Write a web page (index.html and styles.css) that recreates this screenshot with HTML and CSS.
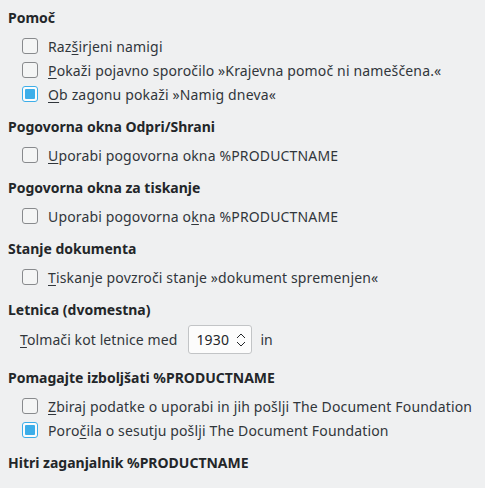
FILE: index.html
```html
<!DOCTYPE html>
<html>
<head>
<meta charset="utf-8">
<link rel="stylesheet" href="styles.css">
</head>
<body>
<div class="page">
  <section class="sect">
    <h2 class="head">Pomoč</h2>
    <div class="row"><span class="cb"></span><span class="lbl">Raz<u>š</u>irjeni namigi</span></div>
    <div class="row"><span class="cb"></span><span class="lbl"><u>P</u>okaži pojavno sporočilo »Krajevna pomoč ni nameščena.«</span></div>
    <div class="row"><span class="cb on"></span><span class="lbl"><u>O</u>b zagonu pokaži »Namig dneva«</span></div>
  </section>
  <section class="sect">
    <h2 class="head">Pogovorna okna Odpri/Shrani</h2>
    <div class="row"><span class="cb"></span><span class="lbl"><u>U</u>porabi pogovorna okna %PRODUCTNAME</span></div>
  </section>
  <section class="sect">
    <h2 class="head">Pogovorna okna za tiskanje</h2>
    <div class="row"><span class="cb"></span><span class="lbl">Uporabi pogovorna o<u>k</u>na %PRODUCTNAME</span></div>
  </section>
  <section class="sect">
    <h2 class="head">Stanje dokumenta</h2>
    <div class="row"><span class="cb"></span><span class="lbl"><u>T</u>iskanje povzroči stanje »dokument spremenjen«</span></div>
  </section>
  <section class="sect">
    <h2 class="head">Letnica (dvomestna)</h2>
    <div class="spinrow">
      <span class="spinlbl"><u>T</u>olmači kot letnice med</span>
      <span class="spin"><span class="val">1930</span>
        <svg class="arrows" width="10" height="16" viewBox="0 0 10 16"><path d="M1 6 L5 2 L9 6 M1 10 L5 14 L9 10" fill="none" stroke="#232629" stroke-width="1"/></svg>
      </span>
      <span class="after">in</span>
    </div>
  </section>
  <section class="sect">
    <h2 class="head">Pomagajte izboljšati %PRODUCTNAME</h2>
    <div class="row"><span class="cb"></span><span class="lbl"><u>Z</u>biraj podatke o uporabi in jih pošlji The Document Foundation</span></div>
    <div class="row"><span class="cb on"></span><span class="lbl">Poro<u>č</u>ila o sesutju pošlji The Document Foundation</span></div>
  </section>
  <section class="sect">
    <h2 class="head">Hitri zaganjalnik %PRODUCTNAME</h2>
  </section>
</div>
</body>
</html>
```

FILE: styles.css
```css
html, body {
  margin: 0;
  padding: 0;
  background: #eff0f1;
}
body {
  font-family: "Noto Sans", "Open Sans", sans-serif;
  font-size: 14px;
  color: #232629;
}
.page {
  display: flex;
  flex-direction: column;
  gap: 11px;
  padding: 8px 8px 0 8px;
}
.sect {
  display: flex;
  flex-direction: column;
}
.head {
  margin: 0 0 6px 0;
  font-size: 14px;
  font-weight: bold;
  line-height: 20px;
  height: 20px;
}
.row {
  display: flex;
  align-items: center;
  height: 24px;
  padding-left: 14px;
  gap: 10px;
  white-space: nowrap;
}
.lbl { color: #31363b; letter-spacing: 0.15px; }
u { text-decoration-thickness: 1px; text-underline-offset: 2px; }
.cb {
  box-sizing: border-box;
  width: 16px;
  height: 16px;
  border: 1px solid #888a8d;
  border-radius: 3px;
  background: #f4f5f5;
  position: relative;
  flex: none;
}
.cb.on {
  border-color: #3daee9;
  background: #fcfcfc;
}
.cb.on::after {
  content: "";
  position: absolute;
  left: 2px; top: 2px; right: 2px; bottom: 2px;
  background: #3daee9;
  border-radius: 1px;
}
.spinrow {
  display: flex;
  align-items: center;
  height: 29px;
  margin-top: -1px;
  margin-bottom: 3px;
  padding-left: 12px;
  white-space: nowrap;
}
.spinlbl { margin-right: 11px; color: #31363b; letter-spacing: 0.1px; }
.spin {
  box-sizing: border-box;
  width: 64px;
  height: 29px;
  border: 1px solid #c2c4c6;
  border-radius: 3px;
  background: #fcfcfc;
  display: flex;
  align-items: center;
  padding-left: 7px;
  padding-right: 5px;
  letter-spacing: 0.15px;
}
.val { flex: 1; }
.arrows { flex: none; }
.after { margin-left: 8px; color: #31363b; }
```
